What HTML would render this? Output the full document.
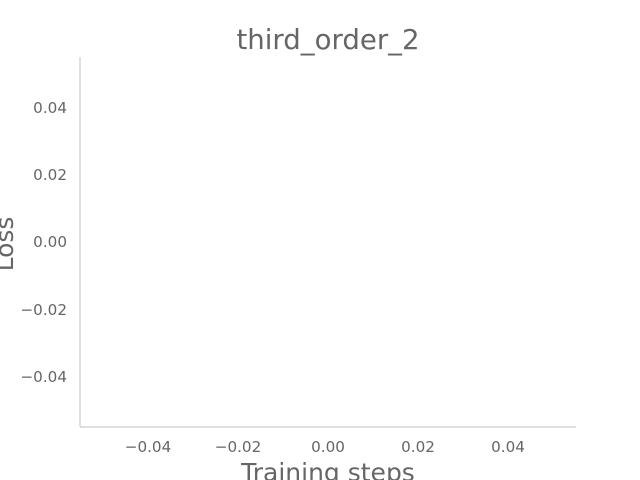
<!DOCTYPE html>
<html><head><style>html,body{margin:0;padding:0;background:#fff;}svg{display:block}</style></head>
<body>
<svg width="640" height="480" xmlns="http://www.w3.org/2000/svg" font-family="DejaVu Sans, sans-serif" fill="#666666">
<rect width="640" height="480" fill="#fff"/>
<line x1="80" y1="57" x2="80" y2="427" stroke="#cccccc" stroke-width="1.2"/>
<line x1="80" y1="427" x2="576" y2="427" stroke="#cccccc" stroke-width="1.2"/>
<text x="328" y="49" font-size="27.6" text-anchor="middle">third_order_2</text>
<g font-size="15.2" text-anchor="end">
<text x="67" y="113">0.04</text>
<text x="67" y="180">0.02</text>
<text x="67" y="247">0.00</text>
<text x="67" y="315">−0.02</text>
<text x="67" y="382">−0.04</text>
</g>
<g font-size="15.2" text-anchor="middle">
<text x="148" y="452">−0.04</text>
<text x="238" y="452">−0.02</text>
<text x="328" y="452">0.00</text>
<text x="418" y="452">0.02</text>
<text x="508" y="452">0.04</text>
</g>
<text x="328" y="481" font-size="25" text-anchor="middle">Training steps</text>
<text transform="translate(13,244) rotate(-90)" font-size="25" text-anchor="middle">Loss</text>
</svg>
</body></html>
